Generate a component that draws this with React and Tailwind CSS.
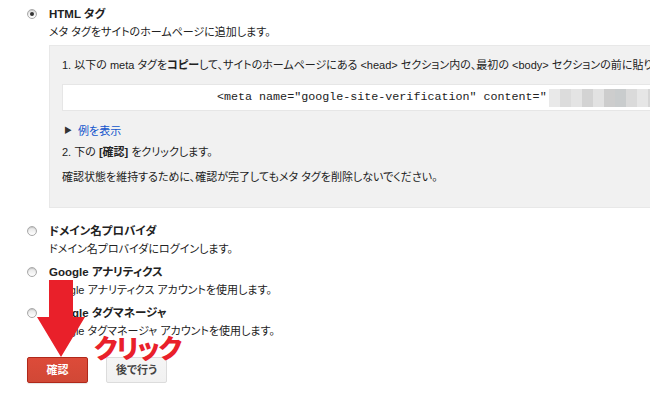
import React from "react";

function Radio({ checked }) {
  return (
    <div className="w-[10px] h-[10px] rounded-full border border-[#a9a9a9] bg-gradient-to-b from-[#e4e4e4] to-white flex items-center justify-center shadow-[inset_0_1px_1px_rgba(0,0,0,0.15)]">
      {checked && <div className="w-[4px] h-[4px] rounded-full bg-[#333]" />}
    </div>
  );
}

const blocks = [
  "#e9e9e9", "#dcdcdc", "#e4e4e4", "#d3d3d3", "#e2e2e2", "#cdcdcd", "#c9cccd", "#dadada", "#e6e6e6", "#d6d6d6",
];

export default function App() {
  return (
    <div
      className="relative w-[650px] h-[402px] overflow-hidden bg-white text-[#222] [font-feature-settings:'palt']"
      style={{ fontFamily: '"Liberation Sans", "Noto Sans CJK JP", sans-serif' }}
    >
      <div className="pl-[27px] pt-[5px]">
        {/* option 1 */}
        <div className="flex">
          <div className="w-[22px] shrink-0 pt-[4px]">
            <Radio checked />
          </div>
          <div className="flex-1 min-w-0">
            <div className="text-[11.5px] font-bold leading-[18px]">HTML タグ</div>
            <div className="text-[11px] leading-[18px]">メタ タグをサイトのホームページに追加します。</div>
            <div className="mt-[4px] w-[700px] bg-[#f1f1f1] border border-[#e8e8e8] pl-[12px] pt-[10px] pb-[21px] text-[11px]">
              <div className="leading-[18px] whitespace-nowrap">
                1. 以下の meta タグを<span className="font-bold">コピー</span>して、サイトのホームページにある &lt;head&gt; セクション内の、最初の &lt;body&gt; セクションの前に貼り付けます。
              </div>
              <div className="mt-[10px] h-[27px] bg-white border border-[#e6e6e6] flex items-center pl-[154px] whitespace-nowrap">
                <span
                  className="text-[11.7px] text-[#222]"
                  style={{ fontFamily: '"Liberation Mono", monospace' }}
                >
                  &lt;meta name="google-site-verification" content="
                </span>
                <div className="flex h-[18px] ml-[2px]">
                  {blocks.map((c, i) => (
                    <div key={i} className="w-[11px] h-full" style={{ background: c }} />
                  ))}
                </div>
              </div>
              <div className="mt-[11px] leading-[18px] flex items-center">
                <span className="text-[8px] text-[#333] ml-[2px] mr-[6px]">▶</span>
                <span className="text-[#1155cc]">例を表示</span>
              </div>
              <div className="mt-[3px] leading-[18px]">
                2. 下の <span className="font-bold">[確認]</span> をクリックします。
              </div>
              <div className="mt-[7px] leading-[18px]">
                確認状態を維持するために、確認が完了してもメタ タグを削除しないでください。
              </div>
            </div>
          </div>
        </div>

        {/* option 2 */}
        <div className="flex mt-[14px]">
          <div className="w-[22px] shrink-0 pt-[4px]">
            <Radio />
          </div>
          <div>
            <div className="text-[11.5px] font-bold leading-[18px]">ドメイン名プロバイダ</div>
            <div className="text-[11px] leading-[18px]">ドメイン名プロバイダにログインします。</div>
          </div>
        </div>

        {/* option 3 */}
        <div className="flex mt-[5px]">
          <div className="w-[22px] shrink-0 pt-[4px]">
            <Radio />
          </div>
          <div>
            <div className="text-[11.5px] font-bold leading-[18px]">Google アナリティクス</div>
            <div className="text-[11px] leading-[18px]">Google アナリティクス アカウントを使用します。</div>
          </div>
        </div>

        {/* option 4 */}
        <div className="flex mt-[5px]">
          <div className="w-[22px] shrink-0 pt-[4px]">
            <Radio />
          </div>
          <div>
            <div className="text-[11.5px] font-bold leading-[18px]">Google タグマネージャ</div>
            <div className="text-[11px] leading-[18px]">Google タグマネージャ アカウントを使用します。</div>
          </div>
        </div>

        {/* buttons */}
        <div className="flex gap-[18px] mt-[17px]">
          <button className="w-[61px] h-[26px] rounded-[2px] border border-[#b0281a] bg-gradient-to-b from-[#dd4b39] to-[#d14836] text-white text-[11px] font-bold shadow-[0_1px_1px_rgba(0,0,0,0.1)]">
            確認
          </button>
          <button className="w-[61px] h-[26px] rounded-[2px] border border-[#dcdcdc] bg-gradient-to-b from-[#f5f5f5] to-[#f1f1f1] text-[#444] text-[11px] font-bold">
            後で行う
          </button>
        </div>
      </div>

      {/* annotation arrow */}
      <svg className="absolute left-0 top-0" width="650" height="402" viewBox="0 0 650 402">
        <polygon points="49,280 73,280 73,317 85,317 61,357 37,317 49,317" fill="#e9202a" />
      </svg>
      <div
        className="absolute left-[94px] top-[334px] text-[26px] font-black text-[#e9202a] leading-none tracking-[-1px]"
        style={{ fontFamily: '"Noto Sans CJK JP", sans-serif' }}
      >
        クリック
      </div>
    </div>
  );
}
